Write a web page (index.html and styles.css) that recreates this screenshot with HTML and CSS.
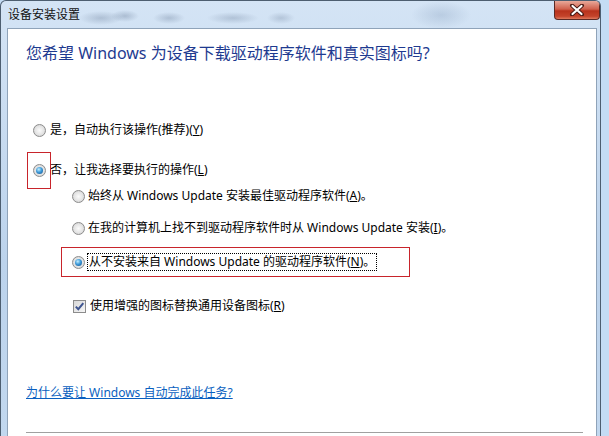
FILE: index.html
```html
<!DOCTYPE html>
<html lang="zh-CN">
<head>
    <meta charset="UTF-8">
    <title>设备安装设置</title>
    <link rel="stylesheet" href="styles.css">
</head>
<body>
    <div class="window">
        <div class="titlebar">
            <span class="title">设备安装设置</span>
            <div class="close">
                <svg width="16" height="12" viewBox="0 0 16 12">
                    <path d="M3 1.5 L13 10.5 M13 1.5 L3 10.5" stroke="#4a1a14" stroke-width="4" stroke-linecap="round"/>
                    <path d="M3.5 2 L12.5 10 M12.5 2 L3.5 10" stroke="#ffffff" stroke-width="2.2" stroke-linecap="round"/>
                </svg>
            </div>
        </div>
        <div class="client">
            <h1 class="heading">您希望 Windows 为设备下载驱动程序软件和真实图标吗?</h1>

            <div class="option opt-yes">
                <span class="radio"></span>
                <span>是，自动执行该操作(推荐)(<u>Y</u>)</span>
            </div>

            <div class="option opt-no">
                <span class="radio checked"></span>
                <span>否，让我选择要执行的操作(<u>L</u>)</span>
                <span class="mark mark-radio"></span>
            </div>

            <div class="option sub sub-1">
                <span class="radio"></span>
                <span>始终从 Windows Update 安装最佳驱动程序软件(<u>A</u>)。</span>
            </div>

            <div class="option sub sub-2">
                <span class="radio"></span>
                <span>在我的计算机上找不到驱动程序软件时从 Windows Update 安装(<u>I</u>)。</span>
            </div>

            <div class="option sub sub-3">
                <span class="radio checked"></span>
                <span class="focus">从不安装来自 Windows Update 的驱动程序软件(<u>N</u>)。</span>
                <span class="mark mark-row"></span>
            </div>

            <div class="option sub check-row">
                <span class="checkbox">
                    <svg width="11" height="11" viewBox="0 0 11 11">
                        <path d="M1.8 5.6 L4.3 8.2 L9.3 2.2" fill="none" stroke="#3f5590" stroke-width="2"/>
                    </svg>
                </span>
                <span>使用增强的图标替换通用设备图标(<u>R</u>)</span>
            </div>

            <a class="help" href="#">为什么要让 Windows 自动完成此任务?</a>

            <div class="separator"></div>
        </div>
    </div>
</body>
</html>
```

FILE: styles.css
```css
body, html {
    margin: 0;
    padding: 0;
    height: 100%;
    overflow: hidden;
    background-color: #c4dcf4;
    font-family: 'Noto Sans', 'Noto Sans CJK SC', sans-serif;
    font-size: 12px;
    color: #000;
}
.window {
    width: 601px;
    height: 100%;
    box-sizing: border-box;
    display: flex;
    flex-direction: column;
    overflow: hidden;
    border: 1px solid #4d5e70;
    border-bottom: none;
    border-radius: 6px 6px 0 0;
    background:
        radial-gradient(ellipse 22px 7px at 100px 17px, rgba(80, 100, 130, 0.28), transparent),
        radial-gradient(ellipse 14px 6px at 124px 15px, rgba(80, 100, 130, 0.3), transparent),
        radial-gradient(ellipse 16px 6px at 168px 17px, rgba(80, 100, 130, 0.28), transparent),
        radial-gradient(ellipse 26px 6px at 232px 17px, rgba(80, 100, 130, 0.26), transparent),
        radial-gradient(ellipse 14px 6px at 280px 17px, rgba(80, 100, 130, 0.24), transparent),
        radial-gradient(ellipse 30px 14px at 440px 14px, rgba(70, 100, 140, 0.18), transparent),
        linear-gradient(to bottom, #d4e4f5, #bcd3ec 60%, #c2d8ef);
}
.titlebar {
    height: 27px;
    display: flex;
    justify-content: space-between;
    align-items: flex-start;
    flex-shrink: 0;
}
.title {
    padding: 7px 0 0 7px;
    line-height: 14px;
    font-size: 12px;
    color: #111;
}
.close {
    width: 46px;
    height: 19px;
    box-sizing: border-box;
    border: 1px solid #5a2a25;
    border-top: none;
    border-radius: 0 0 4px 4px;
    background: linear-gradient(to bottom, #e9a99a 0, #d0614d 45%, #b8321c 55%, #c4442b 85%, #e07a5e 100%);
    display: flex;
    justify-content: center;
    align-items: center;
}
.client {
    flex: 1;
    min-height: 0;
    overflow: hidden;
    margin: 0 3px 0 6px;
    background-color: #fff;
    border: 1px solid #8fa3b9;
    border-bottom: none;
    display: flex;
    flex-direction: column;
}
.heading {
    margin: 13px 0 0 18px;
    font-size: 16px;
    font-weight: normal;
    line-height: 22px;
    color: #1e3a90;
}
.option {
    position: relative;
    display: flex;
    align-items: center;
    gap: 4px;
    height: 20px;
    line-height: 20px;
    margin-left: 25px;
    white-space: nowrap;
    flex-shrink: 0;
}
.opt-yes { margin-top: 56px; }
.opt-no { margin-top: 20px; }
.sub { margin-left: 64px; gap: 3px; }
.sub-1 { margin-top: 6px; }
.sub-2 { margin-top: 12px; }
.sub-3 { margin-top: 14px; }
.check-row { margin-top: 24px; margin-left: 65px; gap: 4px; }
.radio {
    width: 13px;
    height: 13px;
    box-sizing: border-box;
    border-radius: 50%;
    border: 1px solid #8c8c8c;
    background: radial-gradient(circle at 50% 50%, #fbfbfb 0, #e4e4e4 55%, #c8c8c8 100%);
    display: inline-flex;
    justify-content: center;
    align-items: center;
    flex-shrink: 0;
}
.radio.checked::after {
    content: "";
    width: 7px;
    height: 7px;
    border-radius: 50%;
    background: radial-gradient(circle at 40% 35%, #c4efff 0, #3f9bd9 45%, #0b4a88 100%);
}
.checkbox {
    width: 13px;
    height: 13px;
    box-sizing: border-box;
    border: 1px solid #8c8c8c;
    background: linear-gradient(135deg, #d8d8d8, #f6f6f6);
    display: inline-flex;
    justify-content: center;
    align-items: center;
    flex-shrink: 0;
}
.focus {
    outline: 1px dotted #000;
    line-height: 16px;
    padding: 0 1px;
}
.mark {
    position: absolute;
    border: 1px solid #c8242b;
    pointer-events: none;
}
.mark-radio {
    left: -6px;
    top: -8px;
    width: 22px;
    height: 35px;
}
.mark-row {
    left: -11px;
    top: -5px;
    width: 347px;
    height: 28px;
}
.help {
    margin: 67px 0 0 18px;
    line-height: 20px;
    color: #0a5fc0;
    text-decoration: underline;
    align-self: flex-start;
    flex-shrink: 0;
}
.separator {
    margin: 29px 13px 0 18px;
    border-top: 1px solid #a0a0a0;
    flex-shrink: 0;
}
```
